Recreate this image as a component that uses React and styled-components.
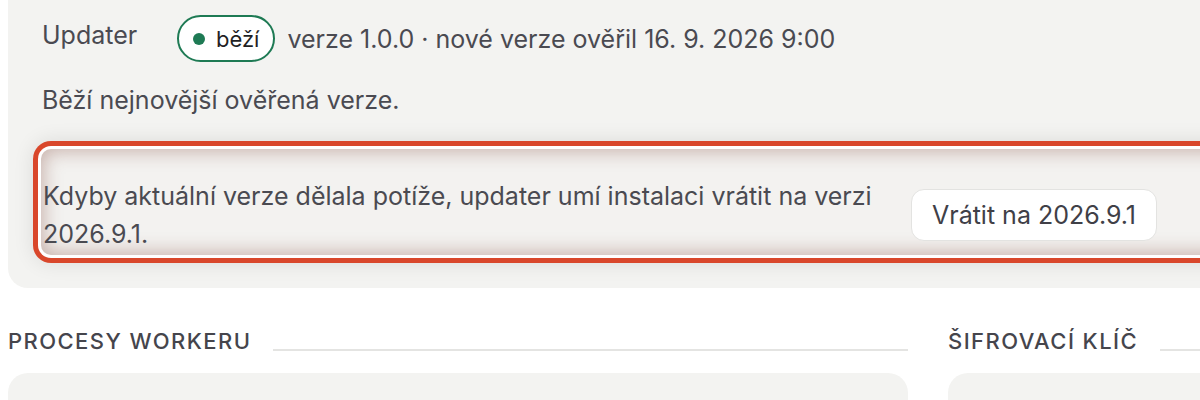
import React from 'react'
import styled, { createGlobalStyle } from 'styled-components';

const GlobalStyle = createGlobalStyle`
  html, body {
    margin: 0;
    padding: 0;
    background: #ffffff;
    overflow: hidden;
  }
  body {
    font-family: Inter, "Noto Sans", "Liberation Sans", sans-serif;
    color: #4a4a51;
  }
`;

const Page = styled.div`
  width: 1260px;
  padding: 0 8px;
`;

const Card = styled.section`
  background: #f3f3f1;
  border-radius: 20px;
  margin-top: -20px;
  padding: 35px 34px 33px 34px;
  display: flex;
  flex-direction: column;
`;

const StatusRow = styled.div`
  display: flex;
  align-items: flex-start;
`;

const Label = styled.div`
  width: 135px;
  font-size: 25px;
  line-height: 40px;
  color: #4a4a51;
`;

const Value = styled.div`
  display: flex;
  align-items: center;
  gap: 12px;
  font-size: 25px;
  color: #4a4a51;
`;

const Pill = styled.span`
  display: inline-flex;
  align-items: center;
  gap: 11px;
  height: 47px;
  box-sizing: border-box;
  padding: 0 14px;
  border: 2px solid ${p => p.tone};
  border-radius: 999px;
  background: #ffffff;
  color: #1f1f24;
  font-size: 22px;
`;

const Dot = styled.span`
  width: 12px;
  height: 12px;
  border-radius: 50%;
  background: ${p => p.tone};
`;

const Note = styled.p`
  margin: 20px 0 0 0;
  font-size: 25px;
  line-height: 37px;
`;

const RollbackRow = styled.div`
  margin: 30px 0 0 -1px;
  padding: 28px 77px 2px 2px;
  border-radius: 10px;
  display: flex;
  align-items: center;
  gap: 24px;
  background: #f3f2f0;
  box-shadow:
    0 0 0 3px #ffffff,
    0 0 0 8px #d9472b,
    0 0 20px 9px rgba(0, 0, 0, 0.09),
    inset 0 0 18px 3px rgba(120, 60, 45, 0.34);
`;

const RollbackText = styled.p`
  flex: 1;
  margin: 0;
  font-size: 25px;
  line-height: 38px;
  color: #4a4a51;
`;

const Button = styled.button`
  flex: none;
  height: 52px;
  padding: 0 20px;
  border: 1px solid #e3e3e1;
  border-radius: 13px;
  background: #ffffff;
  font-family: inherit;
  font-size: 25px;
  color: #404047;
  cursor: pointer;
`;

const Columns = styled.div`
  display: grid;
  grid-template-columns: 900px 1fr;
  column-gap: 40px;
  margin-top: 38px;
`;

const Section = styled.div`
  display: flex;
  flex-direction: column;
  gap: 16px;
`;

const Heading = styled.div`
  display: flex;
  align-items: flex-end;
  gap: 22px;
`;

const HeadingText = styled.h2`
  margin: 0;
  font-size: 22px;
  line-height: 31px;
  font-weight: 500;
  letter-spacing: 0.065em;
  text-transform: uppercase;
  color: #45454c;
  white-space: nowrap;
`;

const Rule = styled.span`
  flex: 1;
  height: 2px;
  margin-bottom: 6px;
  background: #e4e4e2;
`;

const Panel = styled.div`
  height: 120px;
  border-radius: 20px;
  background: #f3f3f1;
`;

const GREEN = '#1e7a54';

const App = () => {
  return (
    <>
      <GlobalStyle />
      <Page>
        <Card>
          <StatusRow>
            <Label>Updater</Label>
            <Value>
              <Pill tone={GREEN}>
                <Dot tone={GREEN} />
                běží
              </Pill>
              <span>verze 1.0.0 · nové verze ověřil 16. 9. 2026 9:00</span>
            </Value>
          </StatusRow>
          <Note>Běží nejnovější ověřená verze.</Note>
          <RollbackRow>
            <RollbackText>
              Kdyby aktuální verze dělala potíže, updater umí instalaci vrátit na verzi 2026.9.1.
            </RollbackText>
            <Button>Vrátit na 2026.9.1</Button>
          </RollbackRow>
        </Card>
        <Columns>
          <Section>
            <Heading>
              <HeadingText>Procesy workeru</HeadingText>
              <Rule />
            </Heading>
            <Panel />
          </Section>
          <Section>
            <Heading>
              <HeadingText>Šifrovací klíč</HeadingText>
              <Rule />
            </Heading>
            <Panel />
          </Section>
        </Columns>
      </Page>
    </>
  )
}

export default App
